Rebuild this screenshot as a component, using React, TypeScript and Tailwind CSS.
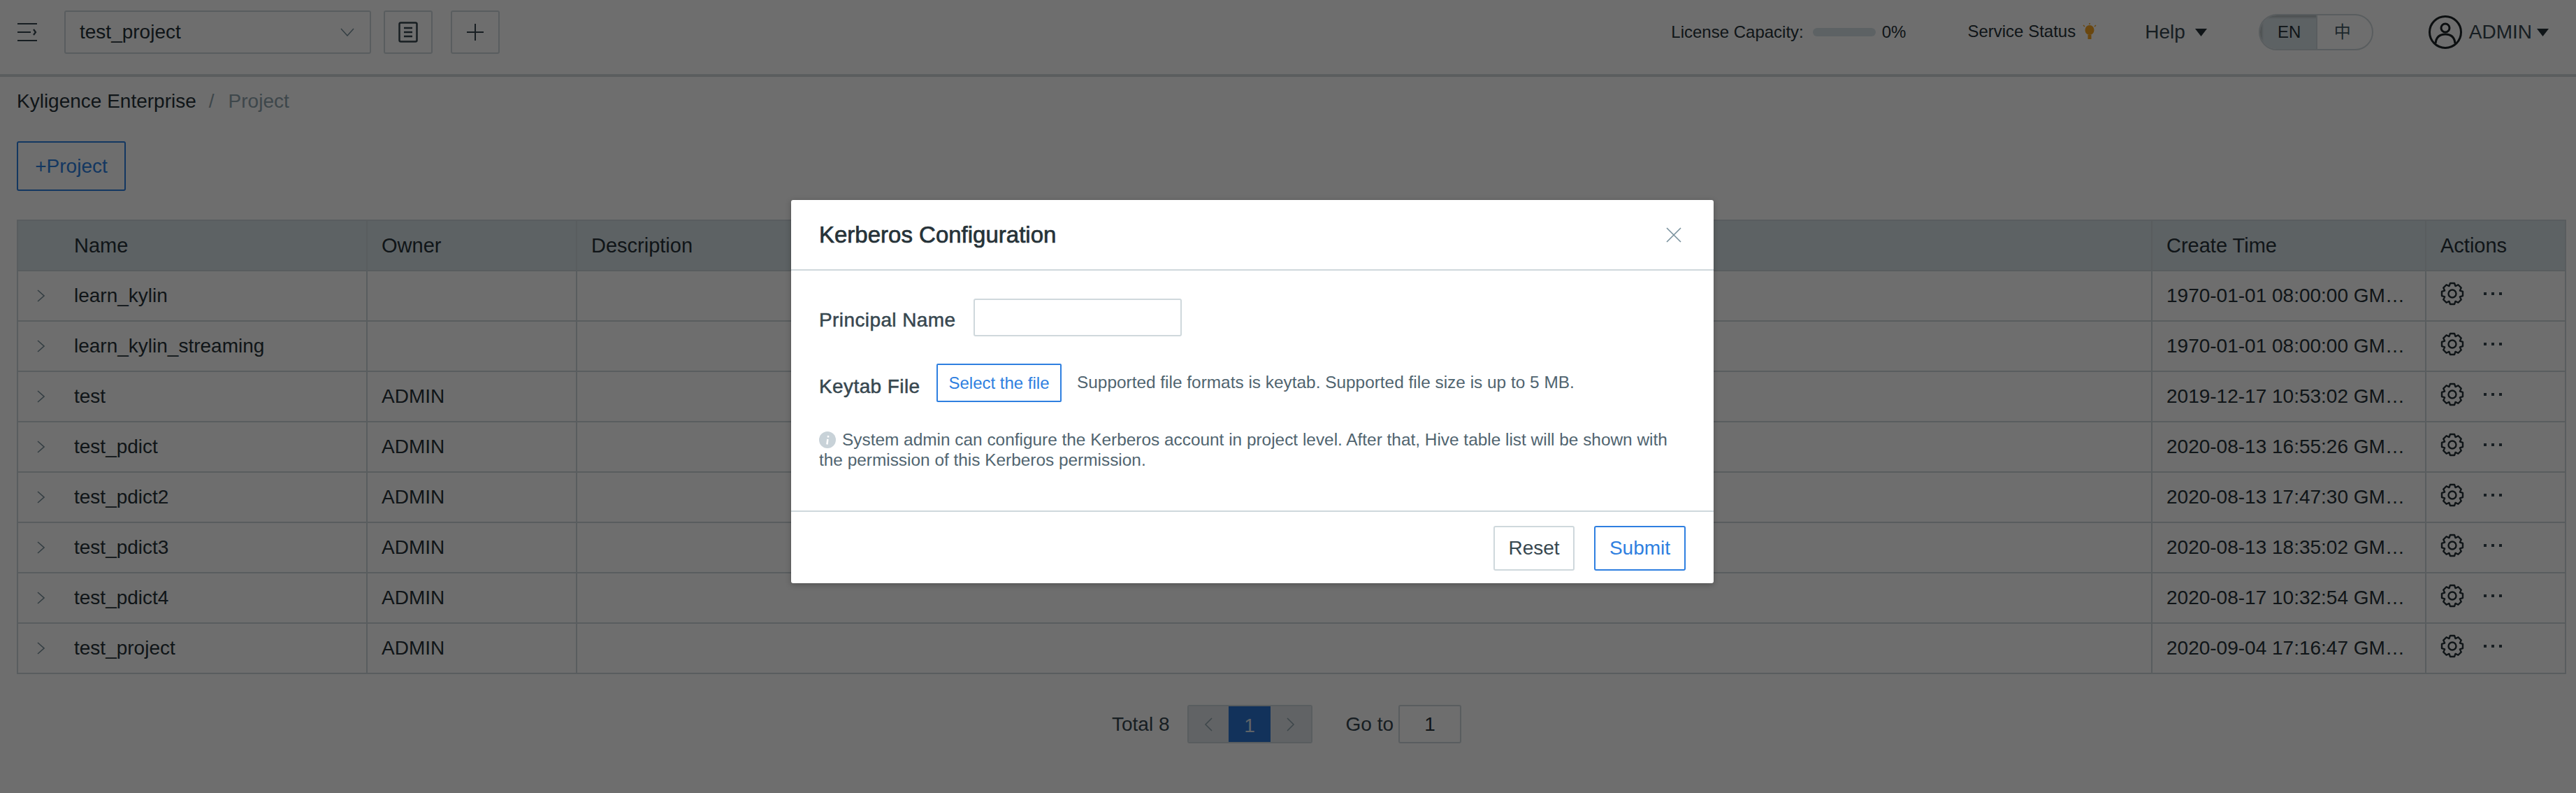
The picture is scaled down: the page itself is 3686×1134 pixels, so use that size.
const rows = [
  { name: "learn_kylin", owner: "", time: "1970-01-01 08:00:00 GMT+8" },
  { name: "learn_kylin_streaming", owner: "", time: "1970-01-01 08:00:00 GMT+8" },
  { name: "test", owner: "ADMIN", time: "2019-12-17 10:53:02 GMT+8" },
  { name: "test_pdict", owner: "ADMIN", time: "2020-08-13 16:55:26 GMT+8" },
  { name: "test_pdict2", owner: "ADMIN", time: "2020-08-13 17:47:30 GMT+8" },
  { name: "test_pdict3", owner: "ADMIN", time: "2020-08-13 18:35:02 GMT+8" },
  { name: "test_pdict4", owner: "ADMIN", time: "2020-08-17 10:32:54 GMT+8" },
  { name: "test_project", owner: "ADMIN", time: "2020-09-04 17:16:47 GMT+8" },
];

const gridCols = "grid grid-cols-[500px_300px_1fr_392px_200px]";
const cell = "flex items-center border-l-2 border-[#cfd8dc] pl-[20px]";

// eight rounded teeth round the centre of a 34 box
const gearPoints = Array.from({ length: 8 }, (_, i) => {
  const a = (i * Math.PI) / 4;
  return [
    [a - 0.39, 11.8],
    [a - 0.2, 15.3],
    [a + 0.2, 15.3],
    [a + 0.39, 11.8],
  ]
    .map(([t, r]) => `${(17 + Math.sin(t) * r).toFixed(2)},${(17 - Math.cos(t) * r).toFixed(2)}`)
    .join(" ");
}).join(" ");

function Gear() {
  return (
    <svg width="34" height="34" viewBox="0 0 34 34" fill="none" stroke="#263238" strokeWidth="2.4" strokeLinejoin="round">
      <polygon points={gearPoints} />
      <circle cx="17" cy="17" r="5.5" />
    </svg>
  );
}

function Caret() {
  return (
    <svg width="17" height="11" viewBox="0 0 17 11">
      <path d="M0 0h17L8.5 11z" fill="#263238" />
    </svg>
  );
}

function TopBar() {
  return (
    <header className="flex h-[110px] items-start justify-between border-b-[4px] border-[#d4dadd] bg-white">
      <div className="flex items-center pt-[15px]">
        <svg width="30" height="28" viewBox="0 0 30 28" fill="none" stroke="#37474f" strokeWidth="2.2" className="ml-[24px]">
          <path d="M1 2h28M1 14h19M1 26h28M24 10l3 4-3 4" />
        </svg>
        <div className="ml-[38px] flex h-[62px] w-[439px] items-center justify-between rounded-[3px] border-2 border-[#cfd8dc] pl-[20px] pr-[22px] text-[28px] text-[#263238]">
          test_project
          <svg width="20" height="12" viewBox="0 0 20 12" fill="none" stroke="#78909c" strokeWidth="1.5">
            <path d="M1 1l9 10 9-10" />
          </svg>
        </div>
        <div className="ml-[18px] flex h-[62px] w-[70px] items-center justify-center rounded-[3px] border-2 border-[#cfd8dc]">
          <svg width="28" height="30" viewBox="0 0 28 30" fill="none" stroke="#37474f" strokeWidth="2.5">
            <rect x="1.5" y="1.5" width="25" height="27" rx="2" />
            <path d="M8 9h12M8 15h12M8 21h12" />
          </svg>
        </div>
        <div className="ml-[26px] flex h-[62px] w-[70px] items-center justify-center rounded-[3px] border-2 border-[#cfd8dc]">
          <svg width="24" height="24" viewBox="0 0 24 24" fill="none" stroke="#37474f" strokeWidth="2">
            <path d="M12 0v24M0 12h24" />
          </svg>
        </div>
      </div>
      <div className="flex items-center pt-[20px] text-[#263238]">
        <span className="text-[24px]">License Capacity:</span>
        <span className="ml-[13px] h-[12px] w-[90px] rounded-full bg-[#d8e3e8]"></span>
        <span className="ml-[9px] text-[24px]">0%</span>
        <span className="ml-[88px] -mt-[3px] text-[24px]">Service Status</span>
        <svg width="22" height="24" viewBox="0 0 22 24" className="ml-[9px] -mt-[3px]">
          <ellipse cx="11" cy="10" rx="6.5" ry="7" fill="#f5a623" />
          <rect x="8.5" y="17" width="5" height="6" fill="#f5a623" />
          <path d="M11 0v2M2 3l2 2M20 3l-2 2" stroke="#f5a623" strokeWidth="1.5" />
        </svg>
        <span className="ml-[68px] text-[28px] text-[#37474f]">Help</span>
        <span className="ml-[14px] flex"><Caret /></span>
        <div className="ml-[74px] flex h-[52px] w-[164px] overflow-hidden rounded-full border-2 border-[#cfd8dc]">
          <span className="flex w-[80px] items-center justify-center bg-[#d8e3e8] pl-[4px] text-[24px] shadow-[inset_3px_3px_3px_rgba(0,0,0,0.18)]">EN</span>
          <span className="flex flex-1 items-center justify-center border-l-2 border-[#cfd8dc] pr-[6px] text-[24px] text-[#455a64]">中</span>
        </div>
        <svg width="50" height="50" viewBox="0 0 50 50" fill="none" stroke="#1c2326" strokeWidth="3" className="ml-[78px]">
          <circle cx="25" cy="25" r="22.5" />
          <circle cx="25" cy="19" r="6" />
          <path d="M11 41c1-10 7-13 14-13s13 3 14 13" />
        </svg>
        <span className="ml-[9px] text-[28px] text-[#37474f]">ADMIN</span>
        <span className="ml-[7px] mr-[39px] flex"><Caret /></span>
      </div>
    </header>
  );
}

function ProjectTable() {
  return (
    <div className="mt-[41px] border-b-2 border-r-2 border-[#cfd8dc] text-[28px] text-[#263238]">
      <div className={`${gridCols} h-[72px] border-t-2 border-[#cfd8dc] bg-[#d8e3e8] text-[29px]`}>
        <div className={`${cell} !pl-[80px] pt-[2px]`}>Name</div>
        <div className={`${cell} pt-[2px]`}>Owner</div>
        <div className={`${cell} pt-[2px]`}>Description</div>
        <div className={`${cell} pt-[2px]`}>Create Time</div>
        <div className={`${cell} pt-[2px]`}>Actions</div>
      </div>
      {rows.map((row) => (
        <div key={row.name} className={`${gridCols} h-[72px] border-t-2 border-[#cfd8dc]`}>
          <div className={`${cell} !pl-[27px]`}>
            <svg width="11" height="18" viewBox="0 0 11 18" fill="none" stroke="#78909c" strokeWidth="1.6">
              <path d="M1 1l9 8-9 8" />
            </svg>
            <span className="ml-[42px]">{row.name}</span>
          </div>
          <div className={cell}>{row.owner}</div>
          <div className={cell}></div>
          <div className={`${cell} pr-[20px]`}>
            <span className="truncate">{row.time}</span>
          </div>
          <div className={`${cell} pb-[7px]`}>
            <Gear />
            <span className="ml-[28px] flex gap-[7px]">
              <i className="h-[4px] w-[4px] bg-[#37474f]"></i>
              <i className="h-[4px] w-[4px] bg-[#37474f]"></i>
              <i className="h-[4px] w-[4px] bg-[#37474f]"></i>
            </span>
          </div>
        </div>
      ))}
    </div>
  );
}

function Pagination() {
  return (
    <div className="mt-[44px] flex items-center justify-center pr-[14px] text-[28px] text-[#455a64]">
      <span className="text-[#37474f]">Total 8</span>
      <div className="ml-[25px] flex h-[55px] w-[179px] overflow-hidden rounded-[3px] border-2 border-[#cfd8dc]">
        <span className="flex flex-1 items-center justify-center bg-[#e0e6e9]">
          <svg width="12" height="20" viewBox="0 0 12 20" fill="none" stroke="#90a4ae" strokeWidth="1.6"><path d="M11 1l-9 9 9 9" /></svg>
        </span>
        <span className="-my-[2px] flex w-[60px] items-center justify-center bg-[#2a75d2] pt-[4px] text-[#dde6ee]">1</span>
        <span className="flex flex-1 items-center justify-center bg-[#e0e6e9]">
          <svg width="12" height="20" viewBox="0 0 12 20" fill="none" stroke="#90a4ae" strokeWidth="1.6"><path d="M1 1l9 9-9 9" /></svg>
        </span>
      </div>
      <span className="ml-[48px] text-[#37474f]">Go to</span>
      <span className="ml-[7px] flex h-[55px] w-[90px] items-center justify-center rounded-[3px] border-2 border-[#cfd8dc] text-[#263238]">1</span>
    </div>
  );
}

function KerberosDialog() {
  return (
    <div className="absolute left-[1132px] top-[286px] flex h-[548px] w-[1320px] flex-col rounded-[3px] bg-white shadow-[0_2px_8px_rgba(0,0,0,0.25)]">
      <div className="flex h-[101px] shrink-0 items-center justify-between border-b-2 border-[#cfd8dc] pl-[40px] pr-[46px]">
        <span className="text-[33px] text-[#263238] [-webkit-text-stroke:0.7px_#263238]">Kerberos Configuration</span>
        <svg width="22" height="22" viewBox="0 0 22 22" fill="none" stroke="#78909c" strokeWidth="1.6">
          <path d="M1 1l20 20M21 1L1 21" />
        </svg>
      </div>
      <div className="flex-1 pl-[40px] pr-[40px] pt-[40px] text-[#50646f]">
        <div className="flex items-center">
          <span className="w-[221px] pt-[8px] text-[28px] tracking-[0.4px] text-[#37474f] [-webkit-text-stroke:0.5px_#37474f]">Principal Name</span>
          <div className="h-[54px] w-[298px] rounded-[3px] border-2 border-[#cfd8dc]"></div>
        </div>
        <div className="mt-[39px] flex items-center">
          <span className="w-[168px] pt-[10px] text-[28px] tracking-[0.4px] text-[#37474f] [-webkit-text-stroke:0.5px_#37474f]">Keytab File</span>
          <button className="h-[55px] w-[179px] rounded-[2px] border-2 border-[#2e7fe0] text-[24px] text-[#2e7fe0]">Select the file</button>
          <span className="ml-[22px] text-[24.4px]">Supported file formats is keytab. Supported file size is up to 5 MB.</span>
        </div>
        <p className="mt-[39px] text-[24.4px] leading-[29px]">
          <svg width="24" height="24" viewBox="0 0 24 24" className="mr-[9px] inline-block align-[-4px]">
            <circle cx="12" cy="12" r="12" fill="#c8d2d8" />
            <path d="M13 6v2.5M12.4 11l-1 7.5" stroke="#fff" strokeWidth="2.5" />
          </svg>
          System admin can configure the Kerberos account in project level. After that, Hive table list will be shown with the permission of this Kerberos permission.
        </p>
      </div>
      <div className="flex h-[104px] shrink-0 justify-end gap-[28px] border-t-2 border-[#cfd8dc] pr-[40px] pt-[20px]">
        <button className="h-[64px] w-[116px] rounded-[3px] border-2 border-[#cfd8dc] text-[28px] text-[#37474f]">Reset</button>
        <button className="h-[64px] w-[131px] rounded-[3px] border-2 border-[#2e7fe0] text-[28px] text-[#2e7fe0]">Submit</button>
      </div>
    </div>
  );
}

export default function App() {
  return (
    <div className="relative h-[1134px] w-[3686px] overflow-hidden bg-white [font-family:'Liberation_Sans','Noto_Sans_CJK_SC',sans-serif]">
      <TopBar />
      <main className="pl-[24px] pr-[14px]">
        <div className="flex h-[70px] items-center text-[28px]">
          <span className="text-[#263238]">Kyligence Enterprise</span>
          <span className="ml-[18px] text-[#90a4ae]">/</span>
          <span className="ml-[20px] text-[#90a4ae]">Project</span>
        </div>
        <button className="mt-[22px] h-[71px] w-[156px] rounded-[3px] border-2 border-[#2e7fe0] text-[28px] text-[#2e7fe0]">+Project</button>
        <ProjectTable />
        <Pagination />
      </main>
      <div className="absolute inset-0 bg-black/[.57]"></div>
      <KerberosDialog />
    </div>
  );
}
